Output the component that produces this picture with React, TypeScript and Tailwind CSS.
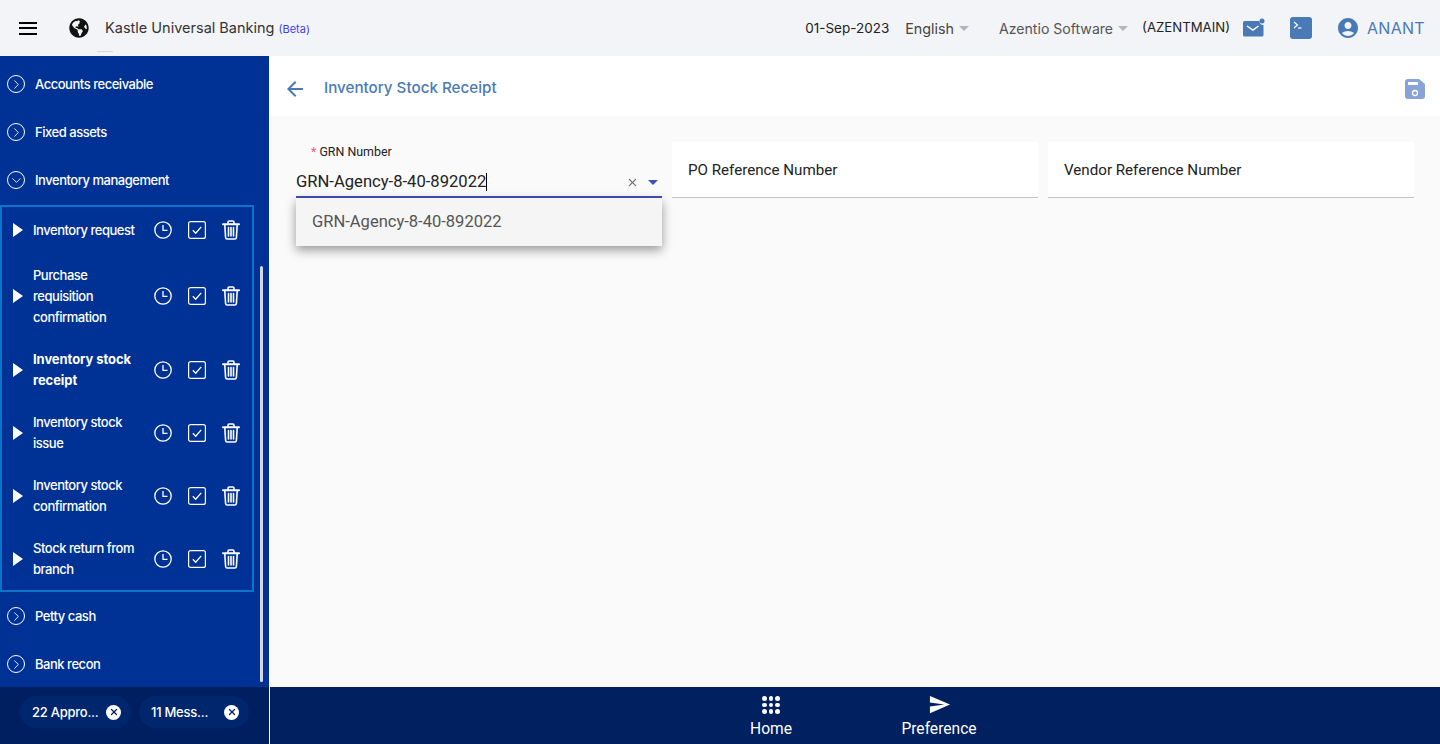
import { ChevronRight, ChevronDown, X } from 'lucide-react';
import { FaGlobeAmericas } from 'react-icons/fa';
import { MdAccountCircle, MdArrowBack, MdSend } from 'react-icons/md';

const subItems = [
  { label: ['Inventory request'], bold: false },
  { label: ['Purchase', 'requisition', 'confirmation'], bold: false },
  { label: ['Inventory stock', 'receipt'], bold: true },
  { label: ['Inventory stock', 'issue'], bold: false },
  { label: ['Inventory stock', 'confirmation'], bold: false },
  { label: ['Stock return from', 'branch'], bold: false },
];

function ClockIcon() {
  return (
    <svg className="ml-2 shrink-0" width="18" height="18" viewBox="0 0 18 18" fill="none" stroke="white" strokeWidth="1.300">
      <circle cx="9" cy="9" r="8.200" />
      <path d="M9 4v5.300h4.500" />
    </svg>
  );
}

function CheckIcon() {
  return (
    <svg className="ml-4 shrink-0" width="18" height="18" viewBox="0 0 18 18" fill="none" stroke="white">
      <rect x="0.600" y="0.600" width="16.800" height="16.800" rx="2" strokeWidth="1.200" />
      <path d="M4.800 9.300l2.900 2.900 5.500-6.400" strokeWidth="1.300" />
    </svg>
  );
}

function TrashIcon() {
  return (
    <svg className="ml-4 shrink-0" width="18" height="20" viewBox="0 0 18 20" fill="none" stroke="white" strokeWidth="1.600" strokeLinecap="round">
      <path d="M1 4.200h16" strokeWidth="2" />
      <path d="M6 3.500V2.200C6 1.500 6.500 1 7.200 1h3.600c.7 0 1.200.5 1.200 1.200v1.300" />
      <path d="M2.800 5l.8 12.500c.1 .9.7 1.500 1.600 1.500h7.600c.9 0 1.500-.6 1.600-1.500L15.200 5" />
      <path d="M6.500 7.500v8.500M9 7.500v8.500M11.500 7.500v8.500" />
    </svg>
  );
}

function TopItem({ label, open }: { label: string; open?: boolean }) {
  return (
    <div className="flex h-12 items-center pl-[7px]">
      <div className="flex h-[18px] w-[18px] items-center justify-center rounded-full border-[1.5px] border-white">
        {open ? (
          <ChevronDown size={15} color="white" strokeWidth={1.400} />
        ) : (
          <ChevronRight size={15} color="white" strokeWidth={1.400} />
        )}
      </div>
      <span className="ml-[10px] mt-[1px] text-[13px] font-medium tracking-[-0.47px] text-white">{label}</span>
    </div>
  );
}

function FieldBox({ label }: { label: string }) {
  return (
    <div className="flex h-14 w-[366px] items-center border-b border-[#c4c4c4] bg-white pl-4 pr-3 pt-[2px] font-['Roboto',sans-serif] text-[15.150px] text-[#222]">
      {label}
    </div>
  );
}

export default function App() {
  return (
    <div className="flex h-[744px] w-[1440px] flex-col overflow-hidden bg-[#fafafa] font-['Inter',sans-serif]">
      <header className="relative flex h-14 shrink-0 items-center bg-[#f3f4f8] pl-[19px] pr-[15px]">
        <div className="flex w-[18px] flex-col gap-[3.500px]">
          <span className="h-[2px] bg-black" />
          <span className="h-[2px] bg-black" />
          <span className="h-[2px] bg-black" />
        </div>
        <FaGlobeAmericas className="ml-[32px] text-[20px] text-[#111]" />
        <span className="ml-[16px] text-[14.500px] text-[#333]">Kastle Universal Banking</span>
        <span className="ml-[4px] mt-[2px] text-[11px] text-[#3d3df0]">(Beta)</span>
        <span className="absolute left-[97px] top-[51px] h-px w-4 bg-[#d4d6dc]" />

        <div className="ml-auto flex items-center">
          <span className="text-[13.500px] text-[#222]">01-Sep-2023</span>
          <span className="ml-[16px] mt-[2px] text-[14.300px] text-[#444]">English</span>
          <span className="ml-[5px] mt-[1px] h-0 w-0 border-x-[5px] border-t-[5px] border-x-transparent border-t-[#b5b5b5]" />
          <span className="ml-[30px] mt-[2px] text-[14.100px] text-[#555]">Azentio Software</span>
          <span className="ml-[5px] mt-[1px] h-0 w-0 border-x-[5px] border-t-[5px] border-x-transparent border-t-[#b5b5b5]" />
          <span className="ml-[14px] text-[13.200px] text-[#222]">(AZENTMAIN)</span>
          <svg className="ml-[13px]" width="22" height="20" viewBox="0 0 22 20">
            <path d="M1.500 3h15a4 4 0 0 0 4 4v10a1.500 1.500 0 0 1-1.500 1.500H1.500A1.500 1.500 0 0 1 0 17V4.500A1.500 1.500 0 0 1 1.500 3z" fill="#4a7ab5" />
            <circle cx="19" cy="3" r="2.500" fill="#4a7ab5" />
            <path d="M4 8l6 4 5.500-4" fill="none" stroke="white" strokeWidth="1.500" />
          </svg>
          <svg className="ml-[24px]" width="24" height="24" viewBox="0 0 24 24">
            <rect x="1" y="1" width="22" height="22" rx="3" fill="#4a7ab5" />
            <path d="M5 6l3.500 3L5 12" fill="none" stroke="white" strokeWidth="1.200" />
            <path d="M9 12h3.500" stroke="white" strokeWidth="1.200" />
          </svg>
          <MdAccountCircle className="ml-[23px] text-[24px] text-[#4a7ab5]" />
          <span className="ml-[7px] text-[16px] tracking-[0.3px] text-[#4a7ab5]">ANANT</span>
        </div>
      </header>

      <div className="flex min-h-0 flex-1">
        <aside className="relative flex w-[269px] shrink-0 flex-col overflow-hidden bg-[#003296]">
          <div className="pt-1">
            <TopItem label="Accounts receivable" />
            <TopItem label="Fixed assets" />
            <TopItem label="Inventory management" open />
            <div className="mt-[1px] w-[254px] border-2 border-[#0b74c8]">
              {subItems.map((item, i) => (
                <div
                  key={item.label[0] + i}
                  className={`flex items-center ${i === 0 ? 'h-[46px]' : i === 1 ? 'h-[85px]' : 'h-[63px]'}`}
                >
                  <svg className="ml-[11px] shrink-0" width="10" height="14" viewBox="0 0 10 14">
                    <path d="M0 0l10 7-10 7z" fill="white" />
                  </svg>
                  <div
                    className={`ml-[10px] w-[113px] shrink-0 text-[13px] leading-[21px] text-white ${
                      item.bold ? 'font-bold tracking-[-0.07px]' : 'font-medium tracking-[-0.47px]'
                    } ${i === 1 ? 'pt-[1px]' : ''}`}
                  >
                    {item.label.map((line) => (
                      <div key={line} className="whitespace-nowrap">
                        {line}
                      </div>
                    ))}
                  </div>
                  <ClockIcon />
                  <CheckIcon />
                  <TrashIcon />
                </div>
              ))}
            </div>
            <TopItem label="Petty cash" />
            <TopItem label="Bank recon" />
          </div>
          <div className="absolute right-[6px] top-[210px] h-[416px] w-[3px] rounded-sm bg-[#d5d8e0]" />
          <div className="absolute bottom-0 left-0 flex h-[57px] w-full items-start bg-[#001f60] pl-5 pt-[9px]">
            <div className="flex h-8 w-[111px] items-center justify-between rounded-full bg-[#00266e] pl-3 pr-[10px] text-[13px] font-medium tracking-[-0.25px] text-white">
              <span className="mt-[1px]">22 Appro...</span>
              <span className="flex h-[15px] w-[15px] items-center justify-center rounded-full bg-white">
                <X size={10} color="#001f60" strokeWidth={3} />
              </span>
            </div>
            <div className="ml-2 flex h-8 w-[110px] items-center justify-between rounded-full bg-[#00266e] pl-3 pr-[10px] text-[13px] font-medium tracking-[-0.25px] text-white">
              <span className="mt-[1px]">11 Mess...</span>
              <span className="flex h-[15px] w-[15px] items-center justify-center rounded-full bg-white">
                <X size={10} color="#001f60" strokeWidth={3} />
              </span>
            </div>
          </div>
        </aside>

        <div className="w-px shrink-0 bg-white" />

        <main className="flex min-w-0 flex-1 flex-col">
          <div className="flex h-[60px] shrink-0 items-center bg-white pl-[13px] pr-[15px] pt-[5px]">
            <MdArrowBack className="text-[24px] text-[#4a7ab5]" />
            <h1 className="ml-[17px] text-[15.200px] font-medium text-[#4a7ab5]">Inventory Stock Receipt</h1>
            <svg className="ml-auto" width="20" height="20" viewBox="0 0 20 20">
              <path d="M3 0h11l6 5v12a3 3 0 0 1-3 3H3a3 3 0 0 1-3-3V3a3 3 0 0 1 3-3z" fill="#8aa3d6" />
              <rect x="3" y="3" width="10" height="3" fill="white" />
              <circle cx="10" cy="14" r="2.500" fill="none" stroke="white" strokeWidth="1.300" />
            </svg>
          </div>

          <div className="flex flex-1 items-start gap-[10px] pl-[26px] pt-[26px]">
            <div className="relative h-14 w-[366px] border-b-2 border-[#3f51b5] font-['Roboto',sans-serif]">
              <div className="pl-[15px] pt-[2px] text-[12.400px] leading-[16px] text-[#222]">
                <span className="text-[#f0587a]">* </span>GRN Number
              </div>
              <div className="mt-[12px] flex items-center text-[16.600px] leading-[20px] text-[#222]">
                <span>GRN-Agency-8-40-892022</span>
                <span className="h-[18px] w-px bg-black" />
                <X className="ml-auto" size={13} color="#777" strokeWidth={2} />
                <span className="ml-[9px] mr-[4px] mt-[1px] h-0 w-0 border-x-[5px] border-t-[5px] border-x-transparent border-t-[#3f51b5]" />
              </div>
              <div className="absolute left-0 top-[56px] z-10 flex h-12 w-full items-center bg-[#f5f5f5] pl-4 text-[16.550px] text-[#555] shadow-[0_4px_10px_rgba(0,0,0,0.4)]">
                GRN-Agency-8-40-892022
              </div>
            </div>
            <FieldBox label="PO Reference Number" />
            <FieldBox label="Vendor Reference Number" />
          </div>

          <footer className="flex h-[57px] shrink-0 items-start bg-[#002060] font-['Roboto',sans-serif] text-[15.600px] text-white">
            <div className="ml-[479px] flex w-[44px] flex-col items-center pt-[9px]">
              <div className="mb-[5px] grid grid-cols-3 gap-[2px]">
                {Array.from({ length: 9 }).map((_, i) => (
                  <span key={i} className="h-[4.500px] w-[4.500px] rounded-full bg-white" />
                ))}
              </div>
              <span className="leading-[20px]">Home</span>
            </div>
            <div className="ml-[106px] flex w-[80px] flex-col items-center pt-[6px]">
              <MdSend className="mb-[3px] text-[23px]" />
              <span className="leading-[20px]">Preference</span>
            </div>
          </footer>
        </main>
      </div>
    </div>
  );
}
